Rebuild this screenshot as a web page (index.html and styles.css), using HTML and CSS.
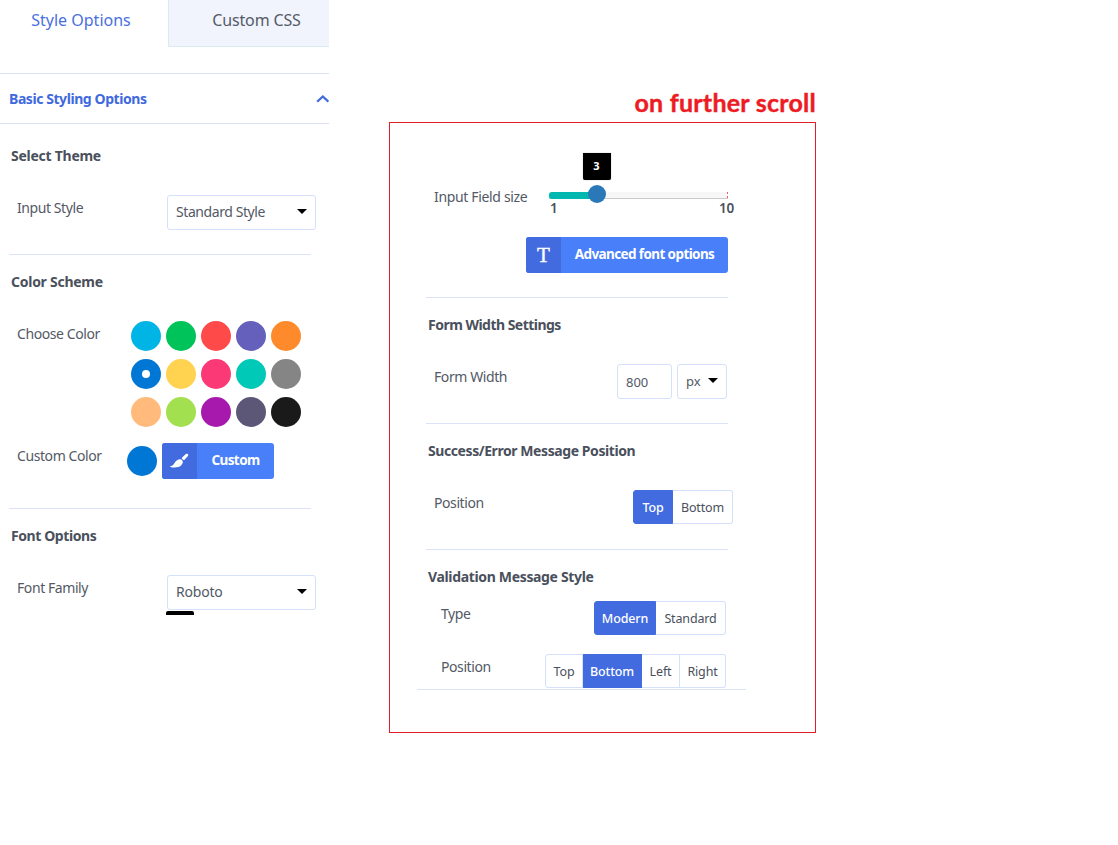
FILE: index.html
```html
<!DOCTYPE html>
<html lang="en">
<head>
<meta charset="utf-8">
<title>Style Options</title>
<link rel="stylesheet" href="styles.css">
</head>
<body>
<div class="page">
  <aside class="panel">
    <nav class="tabs">
      <div class="tab tab-active"><span>Style Options</span></div>
      <div class="tab tab-idle"><span>Custom CSS</span></div>
    </nav>
    <header class="accordion">
      <span>Basic Styling Options</span>
      <svg class="chevron" width="13" height="9" viewBox="0 0 13 9"><path d="M1.2 7.700 6.800 2.500l5.600 5.200" fill="none" stroke="#3f69de" stroke-width="2.2"/></svg>
    </header>
    <section class="section section-first">
      <h3 class="title t-theme">Select Theme</h3>
      <div class="row">
        <span class="label">Input Style</span>
        <div class="select"><span>Standard Style</span><i class="caret"></i></div>
      </div>
    </section>
    <section class="section section-colors">
      <h3 class="title t-color">Color Scheme</h3>
      <div class="row row-swatches">
        <span class="label">Choose Color</span>
        <div class="swatches">
          <i class="dot c-sky"></i><i class="dot c-green"></i><i class="dot c-red"></i><i class="dot c-violet"></i><i class="dot c-orange"></i>
          <i class="dot c-blue picked"></i><i class="dot c-yellow"></i><i class="dot c-pink"></i><i class="dot c-teal"></i><i class="dot c-grey"></i>
          <i class="dot c-peach"></i><i class="dot c-lime"></i><i class="dot c-purple"></i><i class="dot c-slate"></i><i class="dot c-black"></i>
        </div>
      </div>
      <div class="row row-custom">
        <span class="label">Custom Color</span>
        <div class="custom">
          <i class="dot c-blue"></i>
          <div class="button button-custom">
            <span class="button-icon"><svg width="20" height="16" viewBox="0 0 20 16"><path d="M18.700.9c.8.6.6 1.700 0 2.400l-2.900 3.100c-.7.7-1.500.7-2.300-.1s-.8-1.500-.1-2.100L16.800 1.100c.6-.5 1.300-.6 1.900-.2ZM11.200 6.200c1.500.2 2.600 1.300 2.700 2.700-.5 2.600-2.200 4.500-4.700 5.200-3 .8-6 .6-8.600-.7 2.400-.2 3.700-1 4.800-3.100 1.100-2.200 3.200-4 5.800-4.100Z" fill="#fff"/></svg></span>
            <span class="button-text">Custom</span>
          </div>
        </div>
      </div>
    </section>
    <section class="section">
      <h3 class="title">Font Options</h3>
      <div class="row">
        <span class="label">Font Family</span>
        <div class="select select-font"><span>Roboto</span><i class="caret"></i></div>
      </div>
      <div class="tip-edge"></div>
    </section>
  </aside>

  <main class="further">
    <h2 class="note"><span>on further scroll</span></h2>
    <div class="frame">
      <div class="slider-row">
        <span class="label">Input Field size</span>
        <div class="slider">
          <div class="tooltip">3</div>
          <div class="track"><div class="fill"></div><i class="thumb"></i></div>
          <div class="scale"><span>1</span><span>10</span></div>
        </div>
      </div>
      <div class="button button-advanced">
        <span class="button-icon letter">T</span>
        <span class="button-text">Advanced font options</span>
      </div>
      <section class="section">
        <h3 class="title t-width">Form Width Settings</h3>
        <div class="row">
          <span class="label">Form Width</span>
          <div class="size-fields">
            <div class="number">800</div>
            <div class="unit"><span>px</span><i class="caret"></i></div>
          </div>
        </div>
      </section>
      <section class="section section-position">
        <h3 class="title">Success/Error Message Position</h3>
        <div class="row">
          <span class="label">Position</span>
          <div class="group group-wide"><b class="opt on w40">Top</b><span class="opt w60">Bottom</span></div>
        </div>
      </section>
      <section class="section section-validation">
        <h3 class="title t-validation">Validation Message Style</h3>
        <div class="row row-inset">
          <span class="label">Type</span>
          <div class="group"><b class="opt on w62">Modern</b><span class="opt w70">Standard</span></div>
        </div>
        <div class="row row-inset">
          <span class="label">Position</span>
          <div class="group"><span class="opt w38">Top</span><b class="opt on w59">Bottom</b><span class="opt w38">Left</span><span class="opt w46">Right</span></div>
        </div>
      </section>
      <div class="closing-line"></div>
    </div>
  </main>
</div>
</body>
</html>
```

FILE: styles.css
```css
* { box-sizing: border-box; }
body { margin: 0; background: #fff; color: #4a505c; font: 14px/20px "Noto Sans", sans-serif; }
.page { display: flex; width: 1118px; height: 845px; overflow: hidden; }
.panel { width: 329px; flex: none; }
h2, h3 { margin: 0; }
span, b { white-space: nowrap; }

.tabs { display: flex; width: 329px; height: 47px; overflow: hidden; }
.tab { display: flex; justify-content: center; flex: none; height: 47px; padding-top: 10px; font-size: 16px; }
.tab-active { width: 168px; padding-right: 6px; color: #4a70e0; }
.tab-idle { width: 176px; background: #f1f4fd; border-left: 1px solid #d8ebf2; border-bottom: 1px solid #d8ebf2; letter-spacing: -.15px; color: #555b66; }

.accordion { display: flex; align-items: center; justify-content: space-between; height: 51px; margin-top: 26px; padding-left: 9px; border-top: 1px solid #dbe2f3; border-bottom: 1px solid #dbe2f3; color: #3f69de; font-weight: 700; letter-spacing: -.43px; }

.section { width: 302px; margin-left: 9px; padding: 17px 0 24px 2px; border-top: 1px solid #dbe3f9; }
.panel .section-first { border-top: 0; padding-top: 22px; }
.section-colors { padding-bottom: 29px; }
.title { height: 20px; margin-bottom: 29px; font-size: 14px; white-space: nowrap; letter-spacing: -.42px; }
.t-theme, .t-color { letter-spacing: -.26px; }
.t-width { letter-spacing: -.52px; }
.t-validation { letter-spacing: -.34px; }
.row { display: flex; align-items: flex-start; }
.label { flex: none; height: 26px; line-height: 26px; margin-left: 6px; letter-spacing: -.42px; color: #535965; }
.row .label { width: 110px; }

.select { display: flex; align-items: center; justify-content: space-between; flex: none; width: 149px; height: 35px; margin-left: 40px; padding: 0 8px 2px 8px; border: 1px solid #d5e0fb; border-radius: 3px; letter-spacing: -.42px; color: #535965; }
.select-font { letter-spacing: -.2px; }
.caret { width: 10px; height: 5px; background: #000; clip-path: polygon(0 0, 100% 0, 50% 100%); }

.row-swatches .label { width: 114px; }
.swatches { display: grid; grid-template-columns: repeat(5, 30px); gap: 8px 5px; }
.dot { display: block; flex: none; width: 30px; height: 30px; border-radius: 50%; }
.picked { display: grid; place-items: center; }
.picked::after { content: ""; width: 8px; height: 8px; border-radius: 50%; background: #fff; }
.c-sky { background: #00b5e5; }
.c-green { background: #00c459; }
.c-red { background: #ff4a4a; }
.c-violet { background: #6660bd; }
.c-orange { background: #ff8a2b; }
.c-blue { background: #0077d4; }
.c-yellow { background: #ffd24f; }
.c-pink { background: #fa3976; }
.c-teal { background: #00c9b7; }
.c-grey { background: #858585; }
.c-peach { background: #ffba7c; }
.c-lime { background: #a3e04f; }
.c-purple { background: #a718ad; }
.c-slate { background: #5d5777; }
.c-black { background: #1a1a1a; }

.row-custom { margin-top: 16px; }
.custom { display: flex; gap: 5px; }
.custom .dot { margin-top: 3px; }
.button { display: flex; flex: none; height: 36px; border-radius: 3px; overflow: hidden; background: #4980fa; color: #fff; font-weight: 700; }
.button-icon { display: flex; align-items: center; justify-content: center; width: 35px; flex: none; background: #426be0; }
.button-icon svg { margin-left: -2px; }
.button-text { flex: 1; text-align: center; line-height: 34px; font-size: 13.5px; letter-spacing: -.6px; }
.button-custom { width: 112px; }
.panel .section:last-child { padding-bottom: 0; }
.tip-edge { width: 28px; height: 4px; margin: 1px 0 0 155px; background: #000; border-radius: 2px 2px 0 0; }

.further { width: 427px; margin-left: 60px; }
.note { height: 122px; padding-top: 87px; color: #ed1c24; font: 700 25px/30px Lato, sans-serif; letter-spacing: .25px; text-align: right; -webkit-text-stroke: .4px #ed1c24; }
.frame { height: 611px; padding: 30px 0 0 27px; border: 1px solid #e01f28; }
.slider-row { display: flex; height: 84px; }
.slider-row .label { width: 115px; margin: 31px 0 0 17px; letter-spacing: -.34px; }
.slider { width: 186px; }
.tooltip { width: 28px; height: 27px; margin-left: 33.500px; border-radius: 0 0 2px 2px; background: #000; color: #fff; font-size: 11px; font-weight: 700; line-height: 26px; text-align: center; box-shadow: 0 0 1px #777; }
.track { display: flex; align-items: flex-start; width: 179px; height: 7px; margin-top: 12px; border-bottom: 1px solid #ccc; background: linear-gradient(#f06060, #f06060) 100% 0 / 1px 2px no-repeat, linear-gradient(#f06060, #f06060) 100% 100% / 1px 2px no-repeat, #f7f7f7; }
.fill { width: 48px; height: 7px; background: #00b8b0; border-radius: 3px 0 0 3px; flex: none; }
.thumb { width: 18px; height: 18px; margin: -7px 0 0 -9.500px; border-radius: 50%; background: #2a78b8; flex: none; }
.scale { display: flex; justify-content: space-between; width: 185px; padding-left: 1px; font-size: 13.5px; font-weight: 600; line-height: 18px; letter-spacing: -.2px; }
.button-advanced { width: 202px; margin: 0 0 24px 109px; }
.letter { font: 400 21px/36px "Liberation Serif", serif; -webkit-text-stroke: .4px #fff; }

.size-fields { display: flex; gap: 5px; margin-left: 73px; color: #535965; }
.number, .unit { display: flex; align-items: center; height: 35px; border: 1px solid #d5e0fb; border-radius: 3px; font-size: 13px; }
.number { width: 55px; padding-left: 8px; }
.unit { width: 50px; padding: 0 8px 2px; justify-content: space-between; }
.group { display: flex; flex: none; margin-left: auto; margin-right: 2px; }
.group-wide { margin-right: -5px; }
.opt { display: block; height: 34px; flex: none; border: 1px solid #d5e0fb; border-left-width: 0; text-align: center; font-size: 12.5px; line-height: 33px; letter-spacing: -.15px; }
.opt:first-child { border-left-width: 1px; border-radius: 3px 0 0 3px; }
.opt:last-child { border-radius: 0 3px 3px 0; }
.on { background: #426be0; border-color: #426be0; color: #fff; font-weight: 500; }
.w38 { width: 38px; } .w40 { width: 40px; } .w46 { width: 46px; } .w59 { width: 59px; }
.w60 { width: 60px; } .w62 { width: 62px; } .w70 { width: 70px; }
.section-position { padding-bottom: 25px; }
.section-validation { padding-bottom: 0; }
.section-validation .title { margin-bottom: 14px; }
.row-inset .label { margin-left: 13px; width: 60px; }
.row-inset + .row-inset { margin-top: 19px; }
.closing-line { height: 1px; width: 329px; margin-top: 1px; background: #dbe3f9; }
```
